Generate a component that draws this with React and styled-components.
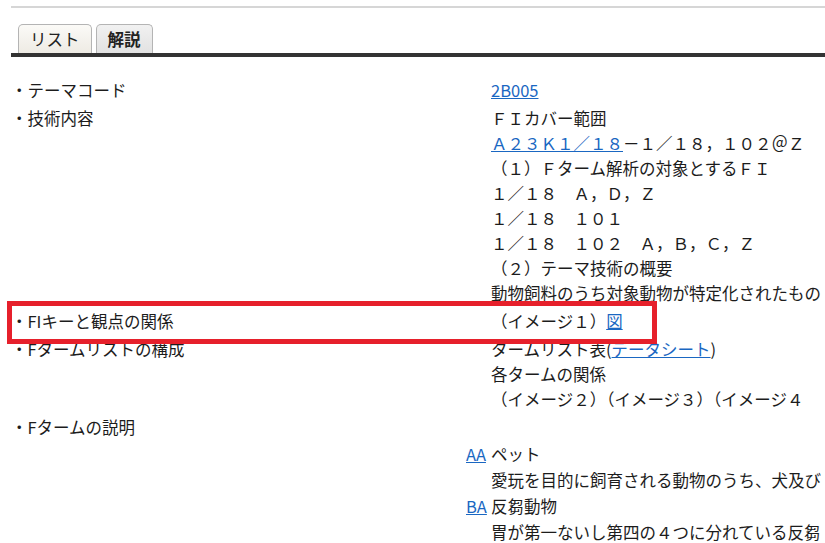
import React from "react";
import styled, { createGlobalStyle } from "styled-components";

const GlobalStyle = createGlobalStyle`
  html, body {
    margin: 0;
    padding: 0;
    background: #ffffff;
    overflow: hidden;
  }
  body {
    font-family: "Noto Sans CJK JP", "Noto Sans", sans-serif;
    font-size: 16.5px;
    color: #1c1c1c;
  }
`;

const Page = styled.div`
  padding: 6px 0 0 11px;
  width: 100%;
  box-sizing: border-box;
`;

const TopRule = styled.div`
  border-top: 2px solid #d6d6d6;
`;

const TabBar = styled.div`
  display: flex;
  align-items: flex-end;
  gap: 4px;
  margin-top: 16px;
  padding-left: 7px;
  border-bottom: 4px solid #333333;
`;

const Tab = styled.div`
  height: 29px;
  box-sizing: border-box;
  padding: 0 11px;
  line-height: 28px;
  border: 1px solid #b4b4b4;
  border-bottom: none;
  border-radius: 5px 5px 0 0;
  font-weight: ${(p) => (p.$active ? 700 : 400)};
  background: ${(p) =>
    p.$active
      ? "linear-gradient(#f1f1f1, #e2e2e2)"
      : "linear-gradient(#fbfaf7, #eeebe4)"};
  color: #222;
`;

const Sheet = styled.div`
  margin-top: 19px;
`;

const Row = styled.div`
  position: relative;
  display: grid;
  grid-template-columns: 480px max-content;
  padding: 1.5px 0;
  line-height: 25px;
  white-space: nowrap;

  ${(p) =>
    p.$marked &&
    `
    &::after {
      content: "";
      position: absolute;
      left: -4px;
      top: -6px;
      width: 650px;
      height: 43px;
      box-sizing: border-box;
      border: 5px solid #e6202b;
      z-index: 1;
      pointer-events: none;
    }
  `}
`;

const Label = styled.div``;

const Cell = styled.div`
  display: flex;
  flex-direction: column;
`;

const Link = styled.a`
  color: #1a67c2;
  text-decoration: underline;
  cursor: pointer;
`;

const TermList = styled.div`
  display: grid;
  grid-template-columns: 25px max-content;
  margin-left: 455px;
  line-height: 26px;
  white-space: nowrap;
`;

const Code = styled(Link)`
  justify-self: start;
`;

const Desc = styled.div`
  grid-column: 2;
`;

const rows = [
  { label: "・テーマコード", lines: [<Link key="c">2B005</Link>] },
  {
    label: "・技術内容",
    lines: [
      "ＦＩカバー範囲",
      <span key="fi">
        <Link>Ａ２３Ｋ１／１８</Link>－１／１８，１０２＠Ｚ
      </span>,
      "（１）Ｆターム解析の対象とするＦＩ",
      "１／１８　Ａ，Ｄ，Ｚ",
      "１／１８　１０１",
      "１／１８　１０２　Ａ，Ｂ，Ｃ，Ｚ",
      "（２）テーマ技術の概要",
      "動物飼料のうち対象動物が特定化されたもの",
    ],
  },
  {
    label: "・FIキーと観点の関係",
    marked: true,
    lines: [
      <span key="i1">
        （イメージ１）<Link>図</Link>
      </span>,
    ],
  },
  {
    label: "・Fタームリストの構成",
    lines: [
      <span key="tl">
        タームリスト表(<Link>データシート</Link>)
      </span>,
      "各タームの関係",
      "（イメージ２）（イメージ３）（イメージ４",
    ],
  },
  { label: "・Fタームの説明", lines: [] },
];

const terms = [
  {
    code: "AA",
    title: "ペット",
    desc: "愛玩を目的に飼育される動物のうち、犬及び",
  },
  {
    code: "BA",
    title: "反芻動物",
    desc: "胃が第一ないし第四の４つに分れている反芻",
  },
];

export default function App() {
  return (
    <>
      <GlobalStyle />
      <Page>
        <TopRule />
        <TabBar>
          <Tab>リスト</Tab>
          <Tab $active>解説</Tab>
        </TabBar>
        <Sheet>
          {rows.map((r) => (
            <Row key={r.label} $marked={r.marked}>
              <Label>{r.label}</Label>
              <Cell>
                {r.lines.map((l, i) => (
                  <div key={i}>{l}</div>
                ))}
              </Cell>
            </Row>
          ))}
          <TermList>
            {terms.map((t) => (
              <React.Fragment key={t.code}>
                <Code>{t.code}</Code>
                <div>{t.title}</div>
                <Desc>{t.desc}</Desc>
              </React.Fragment>
            ))}
          </TermList>
        </Sheet>
      </Page>
    </>
  );
}
